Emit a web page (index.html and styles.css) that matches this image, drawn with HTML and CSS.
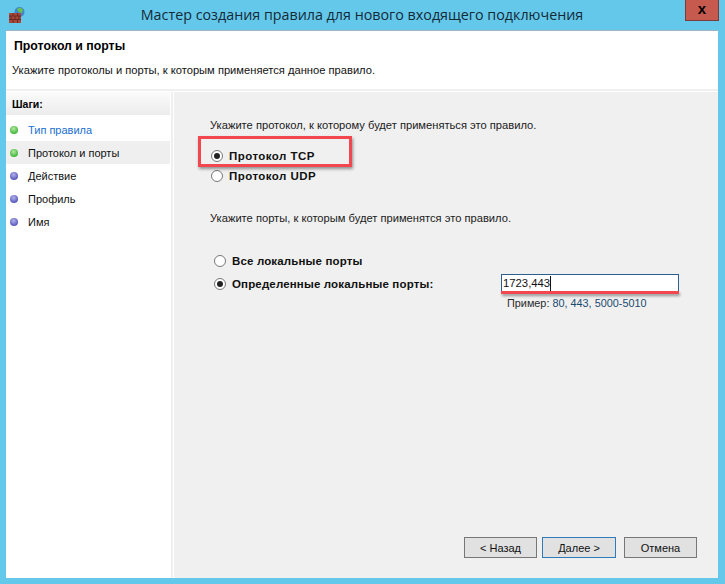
FILE: index.html
```html
<!DOCTYPE html>
<html lang="ru">
<head>
<meta charset="utf-8">
<title>Мастер создания правила</title>
<link rel="stylesheet" href="styles.css">
</head>
<body>
<div class="window">
  <div class="titlebar">
    <svg class="app-icon" width="17" height="18" viewBox="0 0 17 18">
      <circle cx="11.500" cy="6" r="5" fill="#3f86cf"/>
      <path d="M9 3 l3-1.500 3 2-1 3.500-3.500-1z" fill="#6cc04a"/>
      <rect x="1" y="7" width="12" height="10" fill="#a8483a"/>
      <path d="M1 10h12M1 13.500h12M5 7v3M9.500 7v3M3 10v3.500M7 10v3.500M11 10v3.500M5 13.500v3.500M9.500 13.500v3.500" stroke="#6e2a20" stroke-width="1" fill="none"/>
    </svg>
    <div class="title">Мастер создания правила для нового входящего подключения</div>
    <div class="close"><span class="close-x">x</span></div>
  </div>
  <div class="client">
    <header class="head">
      <h1 class="head-title">Протокол и порты</h1>
      <p class="head-sub">Укажите протоколы и порты, к которым применяется данное правило.</p>
    </header>
    <div class="body">
      <nav class="steps">
        <div class="steps-title">Шаги:</div>
        <ul class="steps-list">
          <li class="step"><span class="dot dot-green"></span><span class="link">Тип правила</span></li>
          <li class="step step-current"><span class="dot dot-green"></span>Протокол и порты</li>
          <li class="step"><span class="dot dot-blue"></span>Действие</li>
          <li class="step"><span class="dot dot-blue"></span>Профиль</li>
          <li class="step"><span class="dot dot-blue"></span>Имя</li>
        </ul>
      </nav>
      <main class="main">
        <div class="content">
          <p class="prompt">Укажите протокол, к которому будет применяться это правило.</p>
          <div class="group-protocol">
            <div class="radio-row"><span class="radio on"></span><span class="label wide">Протокол TCP</span></div>
            <div class="radio-row"><span class="radio"></span><span class="label wide">Протокол UDP</span></div>
          </div>
          <p class="prompt prompt-ports">Укажите порты, к которым будет применятся это правило.</p>
          <div class="group-ports">
            <div class="radio-row"><span class="radio"></span><span class="label spaced">Все локальные порты</span></div>
            <div class="radio-row port-row">
              <span class="radio on"></span><span class="label spaced label-fixed">Определенные локальные порты:</span>
              <div class="input"><span>1723,443</span><span class="caret"></span></div>
            </div>
            <div class="example">Пример: <span class="example-nums">80, 443, 5000-5010</span></div>
          </div>
        </div>
        <div class="buttons">
          <button class="btn">&lt; Назад</button>
          <button class="btn btn-default">Далее &gt;</button>
          <button class="btn">Отмена</button>
        </div>
      </main>
    </div>
  </div>
  <div class="mark mark-box"></div>
  <div class="mark mark-line"></div>
</div>
</body>
</html>
```

FILE: styles.css
```css
* { box-sizing: border-box; }
html, body { margin: 0; padding: 0; }
body { width: 725px; height: 584px; overflow: hidden; font-family: "Liberation Sans", Arial, sans-serif; font-size: 11px; color: #111; }
.window { position: relative; width: 725px; height: 584px; background: #64c8ea; padding: 0 7px 6px 6px; display: flex; flex-direction: column; }
.titlebar { height: 30px; flex: none; display: flex; align-items: flex-start; position: relative; }
.app-icon { position: absolute; left: 2px; top: 6px; }
.title { width: 100%; padding: 5px 0 0 0; text-align: center; font-family: "Open Sans", "Liberation Sans", sans-serif; font-size: 14.300px; line-height: 20px; color: #142a38; }
.close { position: absolute; right: -1px; top: 0; width: 34px; height: 21px; background: #c75a4f; border: 1px solid #7a3b3d; border-top: 0; display: flex; align-items: center; justify-content: center; }
.close-x { font-size: 15px; font-weight: 700; line-height: 14px; color: #000; margin-top: -2px; }
.client { flex: 1; background: #fff; display: flex; flex-direction: column; min-height: 0; border-top: 1px solid #9fb7c2; }
.head { height: 60px; flex: none; padding: 7px 0 0 6px; border-bottom: 2px solid #efefef; }
.head-title { margin: 0; padding-left: 2px; font-size: 12.300px; line-height: 16px; font-weight: 700; color: #000; }
.head-sub { margin: 9px 0 0; font-size: 11.170px; line-height: 14px; color: #111; }
.body { flex: 1; display: flex; min-height: 0; padding-top: 1px; }
.steps { width: 167px; flex: none; border-right: 2px solid #efefef; }
.steps-title { height: 23px; padding: 4px 0 0 6px; font-size: 10.500px; line-height: 16px; font-weight: 700; color: #000; background: linear-gradient(#fbfbfb, #ececec); margin-right: 1px; }
.steps-list { list-style: none; margin: 3px 1px 0 0; padding: 0; }
.step { height: 23px; display: flex; align-items: center; font-size: 11px; color: #111; }
.step-current { background: #efefef; }
.link { color: #1a6fd0; }
.dot { width: 8px; height: 8px; border-radius: 50%; margin: 0 10px 0 4px; flex: none; }
.dot-green { background: radial-gradient(circle at 45% 35%, #b6e8a4, #42b83a 70%); }
.dot-blue { background: radial-gradient(circle at 45% 35%, #b3b3ea, #5a5ac0 70%); }
.main { flex: 1; background: #f0f0f0; margin-left: 1px; display: flex; flex-direction: column; justify-content: space-between; padding: 0 21px 20px 0; }
.content { padding: 26px 0 0 36px; }
.prompt { margin: 0; font-size: 11.170px; line-height: 14px; color: #1a1a1a; }
.group-protocol { margin: 16px 0 0 1px; display: flex; flex-direction: column; gap: 5px; }
.radio-row { display: flex; align-items: center; height: 15px; }
.radio { width: 12px; height: 12px; border-radius: 50%; border: 1px solid #777; background: #fff; margin-right: 6px; flex: none; position: relative; }
.radio.on::after { content: ""; position: absolute; left: 2px; top: 2px; width: 6px; height: 6px; border-radius: 50%; background: #222; }
.label { font-size: 11.500px; font-weight: 700; color: #111; white-space: nowrap; }
.label.wide { letter-spacing: 0.450px; }
.label.spaced { letter-spacing: 0.150px; }
.prompt-ports { margin-top: 28px; }
.group-ports { margin: 28px 0 0 4px; }
.port-row { margin-top: 7px; height: 17px; }
.label-fixed { width: 269px; flex: none; }
.input { width: 178px; height: 19px; border: 1px solid #2a5f8f; background: #fff; font-size: 11.300px; line-height: 17px; padding-left: 1px; color: #111; display: flex; align-items: center; }
.caret { width: 1px; height: 15px; background: #111; }
.example { margin: 4px 0 0 293px; font-size: 10.850px; line-height: 14px; color: #2b2b2b; }
.example-nums { color: #1c4a6e; }
.buttons { display: flex; justify-content: flex-end; gap: 5px; }
.btn { width: 73px; height: 21px; padding: 0; background: #e1e1e1; border: 1px solid #777; font: 11px "Liberation Sans", Arial, sans-serif; color: #111; border-radius: 0; }
.btn-default { width: 74px; border-color: #2f7ab8; margin-right: 3px; }
.mark { position: absolute; }
.mark-box { left: 198px; top: 136px; width: 154px; height: 31px; border: 3px solid #f2474f; box-shadow: 1px 2px 3px rgba(0,0,0,.4); }
.mark-line { left: 501px; top: 291px; width: 178px; height: 3px; background: #f2474f; box-shadow: 1px 2px 3px rgba(0,0,0,.4); }
```
